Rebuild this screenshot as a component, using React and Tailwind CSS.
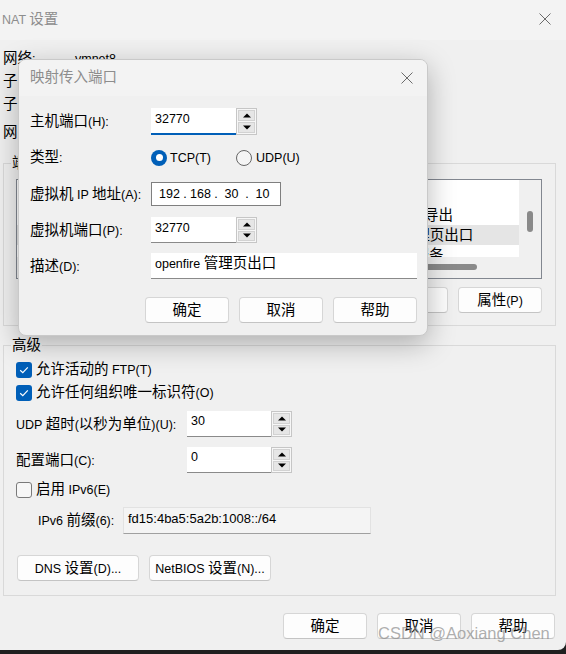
import React from 'react';

const CJK = /([\u2e80-\u9fff\uff00-\uffef]+)/;

// mixed text: CJK runs a bit larger than latin runs, like YaHei UI
function T({ children, latin = 'text-[12.5px]', cjk = 'text-[14.5px]' }) {
  return (
    <span className="whitespace-pre">
      {String(children)
        .split(CJK)
        .map((part, i) =>
          part ? (
            <span key={i} className={i % 2 ? cjk : latin}>
              {part}
            </span>
          ) : null,
        )}
    </span>
  );
}

function CloseIcon() {
  return (
    <svg width="12" height="12" viewBox="0 0 12 12">
      <path d="M0.5 0.5 L11.5 11.5 M11.5 0.5 L0.5 11.5" stroke="#6b6b6b" strokeWidth="1" />
    </svg>
  );
}

function Tri({ down }) {
  return (
    <svg width="8" height="5" viewBox="0 0 8 5">
      <polygon points={down ? '0,0.5 8,0.5 4,4.5' : '0,4.5 8,4.5 4,0.5'} fill="#000" />
    </svg>
  );
}

function Spin() {
  return (
    <div className="flex h-full w-[21px] flex-col gap-[1px] border border-[#c6c6c6] bg-[#f7f7f7] p-[1px]">
      <div className="flex flex-1 items-center justify-center border border-[#d2d2d2] bg-[#e6e6e6]">
        <Tri />
      </div>
      <div className="flex flex-1 items-center justify-center border border-[#d2d2d2] bg-[#e6e6e6]">
        <Tri down />
      </div>
    </div>
  );
}

function NumberBox({ value, focused, h = 'h-[26px]', w = 'w-[84px]', pt = 'pt-0' }) {
  return (
    <div className={`flex ${h}`}>
      <div
        className={`${w} ${pt} bg-white pl-[4px] ${
          focused ? 'border-b-2 border-[#005fb8]' : 'border-b border-[#8a8a8a]'
        }`}
      >
        <T>{value}</T>
      </div>
      <Spin />
    </div>
  );
}

function Button({ children, className = 'w-[84px]' }) {
  return (
    <button
      className={`flex h-[26px] items-center justify-center rounded-[4px] border border-[#d6d6d6] border-b-[#c4c4c4] bg-[#fdfdfd] text-black ${className}`}
    >
      <T>{children}</T>
    </button>
  );
}

function Check({ checked }) {
  return checked ? (
    <span className="flex h-[16px] w-[16px] items-center justify-center rounded-[3px] bg-[#005fb8]">
      <svg width="10" height="8" viewBox="0 0 10 8">
        <path d="M1.2 4.2 L3.8 6.6 L8.8 1.4" fill="none" stroke="#fff" strokeWidth="1.2" />
      </svg>
    </span>
  ) : (
    <span className="h-[16px] w-[16px] rounded-[3px] border border-[#7a7a7a] bg-[#f7f7f7]" />
  );
}

function Radio({ checked }) {
  return checked ? (
    <span className="flex h-[16px] w-[16px] items-center justify-center rounded-full bg-[#005fb8]">
      <span className="h-[7px] w-[7px] rounded-full bg-white" />
    </span>
  ) : (
    <span className="h-[16px] w-[16px] rounded-full border border-[#666666] bg-[#f5f5f5]" />
  );
}

function ListBox() {
  return (
    <div className="flex h-[100px] flex-col border border-[#828790] bg-[#f0f0f0]">
      <div className="flex min-h-0 flex-1">
        <div className="flex-1 overflow-hidden whitespace-nowrap bg-white pt-[25px]">
          <div className="flex h-[20px] items-center pl-[378px]">
            <T>端口导出</T>
          </div>
          <div className="flex h-[20px] items-center bg-[#e5e5e5] pl-[335px]">
            <T>openfire 管理页出口</T>
          </div>
          <div className="flex h-[20px] items-center pl-[354px]">
            <T>数据库服务</T>
          </div>
        </div>
        <div className="w-[22px] pl-[8px] pt-[31px]">
          <div className="h-[21px] w-[6px] rounded-[3px] bg-[#8a8a8a]" />
        </div>
      </div>
      <div className="h-[21px] pl-[313px] pt-[7px]">
        <div className="h-[6px] w-[147px] rounded-[3px] bg-[#8a8a8a]" />
      </div>
    </div>
  );
}

function MapPortDialog() {
  return (
    <div className="absolute left-[18px] top-[59px] flex h-[277px] w-[410px] flex-col overflow-hidden rounded-[8px] border border-[#c9c9c9] bg-[#f0f0f0] shadow-[0_8px_28px_rgba(0,0,0,0.28)]">
      <div className="flex h-[36px] items-center justify-between bg-[#f3f3f3] pb-[1px] pl-[11px] pr-[14px]">
        <span className="text-[#8d8d8d]">
          <T>映射传入端口</T>
        </span>
        <CloseIcon />
      </div>
      <div className="flex flex-col pl-[11px] pr-[10px]">
        <div className="mt-[12px] flex h-[27px] items-center">
          <span className="w-[121px]">
            <T>主机端口(H):</T>
          </span>
          <NumberBox value="32770" focused h="h-[27px]" w="w-[85px]" pt="pt-[1px]" />
        </div>
        <div className="mt-[11px] flex h-[23px] items-center">
          <span className="w-[121px]">
            <T>类型:</T>
          </span>
          <span className="flex w-[85px] items-center gap-[3px]">
            <Radio checked />
            <T>TCP(T)</T>
          </span>
          <span className="flex items-center gap-[4px]">
            <Radio />
            <T>UDP(U)</T>
          </span>
        </div>
        <div className="mt-[13px] flex h-[24px] items-center">
          <span className="w-[121px]">
            <T>虚拟机 IP 地址(A):</T>
          </span>
          <div className="flex h-[24px] w-[130px] items-center border border-[#7f7f7f] bg-white pl-[6px]">
            <span className="w-[23px] text-center">192</span>
            <span className="w-[8px] text-center">.</span>
            <span className="w-[23px] text-center">168</span>
            <span className="w-[8px] text-center">.</span>
            <span className="w-[23px] text-center">30</span>
            <span className="w-[8px] text-center">.</span>
            <span className="w-[23px] text-center">10</span>
          </div>
        </div>
        <div className="mt-[11px] flex h-[26px] items-center">
          <span className="w-[121px]">
            <T>虚拟机端口(P):</T>
          </span>
          <NumberBox value="32770" w="w-[85px]" pt="pt-[1px]" />
        </div>
        <div className="mt-[10px] flex h-[26px] items-center">
          <span className="w-[121px]">
            <T>描述(D):</T>
          </span>
          <div className="h-[26px] w-[266px] border-b border-[#8a8a8a] bg-white pl-[4px]">
            <T>openfire 管理页出口</T>
          </div>
        </div>
        <div className="mt-[18px] flex justify-end gap-[10px]">
          <Button>确定</Button>
          <Button>取消</Button>
          <Button>帮助</Button>
        </div>
      </div>
    </div>
  );
}

export default function App() {
  return (
    <div className="relative h-[654px] w-[566px] overflow-hidden bg-[#1f1f1f] font-['Liberation_Sans','Noto_Sans_CJK_SC',sans-serif] text-[12.5px] leading-[20px] text-black">
      <div className="flex h-[650px] w-[566px] flex-col rounded-br-[8px] bg-[#f0f0f0]">
        <div className="flex h-[40px] items-center justify-between bg-[#f3f3f3] pb-[2px] pl-[2px] pr-[15px]">
          <span className="text-[#8d8d8d]">
            <T>NAT 设置</T>
          </span>
          <CloseIcon />
        </div>

        <div className="flex flex-col px-[3px] pt-[7px]">
          <div className="flex h-[23px] items-center">
            <span className="w-[72px]">
              <T>网络:</T>
            </span>
            <T>vmnet8</T>
          </div>
          <div className="flex h-[23px] items-center">
            <T>子网</T>
          </div>
          <div className="flex h-[23px] items-center">
            <T>子网</T>
          </div>
          <div className="mt-[5px] flex h-[23px] items-center">
            <T>网关</T>
          </div>
        </div>

        <fieldset className="ml-[3px] mr-[10px] mt-[9px] border border-[#d9d9d9]">
          <legend className="ml-[7px] px-[1px]">
            <T>端口</T>
          </legend>
          <div className="pb-[12px] pl-[12px] pr-[13px] pt-[5px]">
            <ListBox />
            <div className="mt-[8px] flex justify-end gap-[10px]">
              <Button>移除</Button>
              <Button>属性(P)</Button>
            </div>
          </div>
        </fieldset>

        <fieldset className="ml-[3px] mr-[10px] mt-[9px] border border-[#d9d9d9]">
          <legend className="ml-[7px] px-[1px]">
            <T>高级</T>
          </legend>
          <div className="flex flex-col pb-[14px] pl-[12px] pt-[2px]">
            <label className="flex h-[23px] items-center gap-[4px]">
              <Check checked />
              <T>允许活动的 FTP(T)</T>
            </label>
            <label className="flex h-[23px] items-center gap-[4px]">
              <Check checked />
              <T>允许任何组织唯一标识符(O)</T>
            </label>
            <div className="mt-[7px] flex h-[26px] items-center">
              <span className="w-[171px]">
                <T>UDP 超时(以秒为单位)(U):</T>
              </span>
              <NumberBox value="30" />
            </div>
            <div className="mt-[10px] flex h-[26px] items-center">
              <span className="w-[171px]">
                <T>配置端口(C):</T>
              </span>
              <NumberBox value="0" />
            </div>
            <label className="mt-[5px] flex h-[23px] items-center gap-[4px]">
              <Check />
              <T>启用 IPv6(E)</T>
            </label>
            <div className="mt-[6px] flex h-[27px] items-center">
              <span className="ml-[22px] w-[85px]">
                <T>IPv6 前缀(6):</T>
              </span>
              <div className="h-[27px] w-[248px] border border-[#e2e2e2] border-b-[#a0a0a0] bg-[#f4f4f4] pl-[4px] pt-[1px] text-[13px]">
                fd15:4ba5:5a2b:1008::/64
              </div>
            </div>
            <div className="mt-[21px] flex gap-[10px] pl-[1px]">
              <Button className="w-[122px]">DNS 设置(D)...</Button>
              <Button className="w-[122px]">NetBIOS 设置(N)...</Button>
            </div>
          </div>
        </fieldset>

        <div className="mt-[17px] flex justify-end gap-[10px] pr-[11px]">
          <Button>确定</Button>
          <Button>取消</Button>
          <Button>帮助</Button>
        </div>
      </div>

      <MapPortDialog />

      <div className="pointer-events-none absolute left-[378px] top-[623px] whitespace-nowrap text-[16.5px] text-[#8c8c8c]/70">
        CSDN @Aoxiang Chen
      </div>
    </div>
  );
}
